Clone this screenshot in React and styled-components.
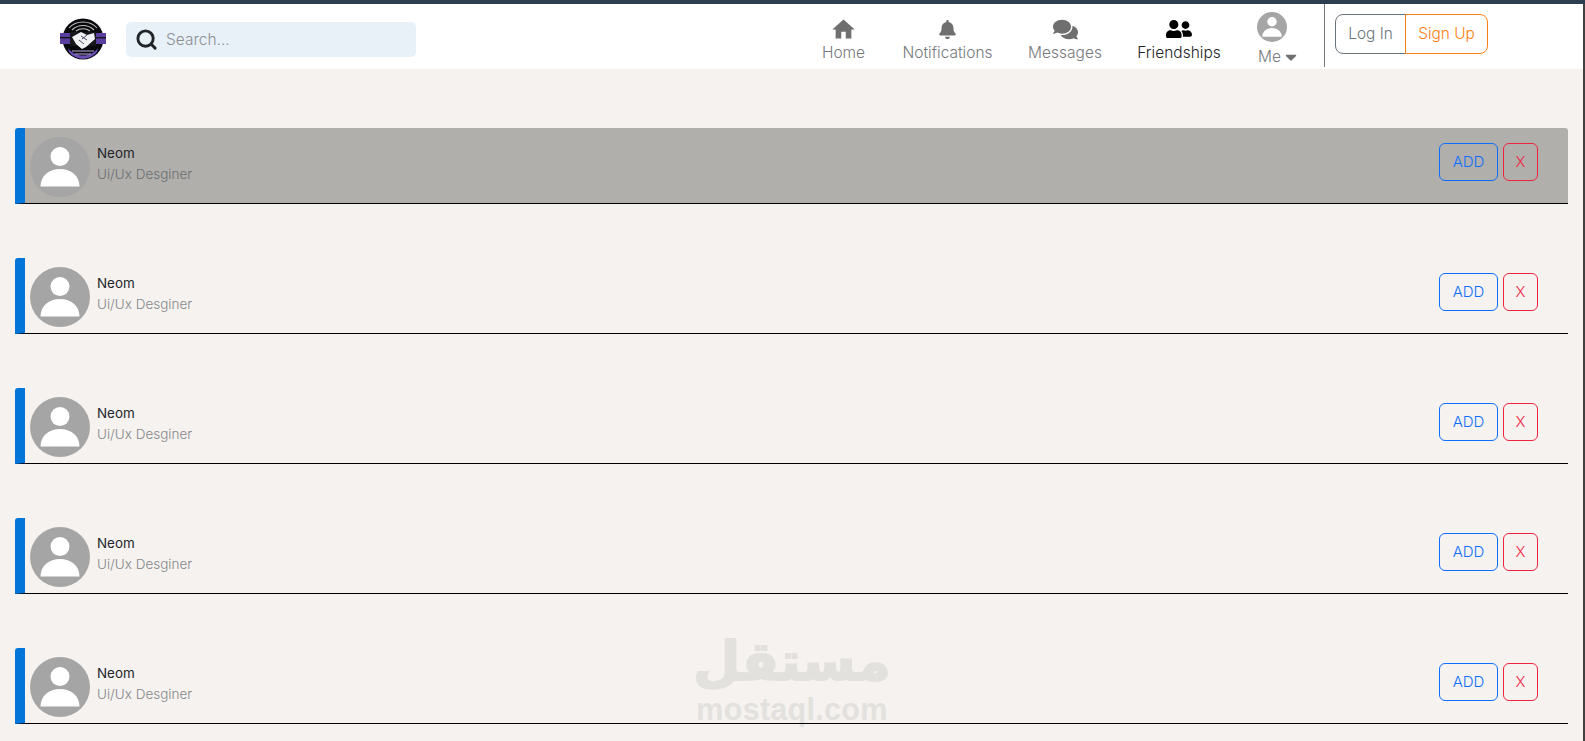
import React from "react";
import styled, { createGlobalStyle } from "styled-components";
import { FaBell, FaComments, FaUserFriends, FaCaretDown } from "react-icons/fa";
import { MdHome } from "react-icons/md";
import { Search } from "lucide-react";

const Global = createGlobalStyle`
  html, body { margin: 0; padding: 0; height: 100%; overflow: hidden; background: #f5f2ef; }
  * { box-sizing: border-box; }
  body { font-family: "Inter", "Liberation Sans", sans-serif; }
`;

const Page = styled.div`
  position: relative;
  height: 741px;
  background: #f5f2ef;
  overflow: hidden;
`;

const TopLine = styled.div`
  height: 4px;
  background: #2c3e50;
`;

const EdgeLine = styled.div`
  position: absolute;
  top: 4px;
  right: 0;
  bottom: 0;
  width: 2px;
  background: #414141;
`;

const Header = styled.header`
  display: flex;
  align-items: center;
  height: 65px;
  margin-right: 2px;
  background: #fff;
  padding-left: 60px;
`;

const LogoWrap = styled.div`
  width: 46px;
  height: 42px;
  margin-right: 20px;
  margin-top: 5px;
  flex: none;
`;

const SearchBox = styled.div`
  display: flex;
  align-items: center;
  width: 290px;
  height: 35px;
  margin-top: 6px;
  padding-left: 9px;
  background: #e9f1f8;
  border-radius: 5px;
  flex: none;
  color: #212529;
`;

const Placeholder = styled.span`
  margin-left: 8px;
  font-size: 15.5px;
  font-weight: 300;
  color: #8b8f93;
`;

const Nav = styled.nav`
  display: flex;
  align-items: flex-start;
  gap: 35px;
  margin-left: auto;
  height: 100%;
`;

const NavItem = styled.div`
  width: ${(p) => p.$w}px;
  display: flex;
  flex-direction: column;
  align-items: center;
  padding-top: 13px;
  color: ${(p) => (p.$active ? "#000" : "#6f6f6f")};
`;

const IconSlot = styled.div`
  display: flex;
  align-items: center;
  justify-content: center;
  height: 24px;
  font-size: ${(p) => p.$size}px;
`;

const NavLabel = styled.span`
  margin-top: 1px;
  font-size: 15.5px;
  line-height: 22px;
  font-weight: 300;
  white-space: nowrap;
  color: ${(p) => (p.$active ? "#212529" : "#777a7d")};
`;

const MeItem = styled.div`
  width: 38px;
  display: flex;
  flex-direction: column;
  align-items: flex-start;
  padding-top: 8px;
`;

const MeLabel = styled.span`
  display: flex;
  align-items: center;
  gap: 1px;
  margin: 4px 0 0 1px;
  font-size: 15.5px;
  line-height: 22px;
  font-weight: 300;
  color: #777a7d;
  white-space: nowrap;
  svg { color: #6f6f6f; font-size: 18px; }
`;

const Divider = styled.div`
  width: 1px;
  height: 63px;
  margin-left: 29px;
  margin-right: 10px;
  align-self: flex-start;
  background: #767676;
`;

const AuthGroup = styled.div`
  display: flex;
  margin-right: 95px;
  margin-top: -6px;
`;

const AuthButton = styled.div`
  display: flex;
  align-items: center;
  justify-content: center;
  width: ${(p) => p.$w}px;
  height: 40px;
  font-size: 15.4px;
  font-weight: 300;
  border: 1px solid ${(p) => p.$color};
  color: ${(p) => p.$color};
  border-radius: ${(p) => p.$radius};
  margin-left: ${(p) => p.$ml || 0}px;
`;

const List = styled.main`
  position: relative;
  z-index: 1;
  display: flex;
  flex-direction: column;
  gap: 54px;
  padding: 59px 17px 0 15px;
`;

const Row = styled.section`
  display: flex;
  align-items: center;
  height: 76px;
  padding: 2px 30px 0 5px;
  border-left: 10px solid #0275d8;
  border-bottom: 1px solid #000;
  border-radius: 3px 3px 0 0;
  background: ${(p) => (p.$hover ? "#b1afac" : "transparent")};
`;

const Avatar = styled.div`
  width: 60px;
  height: 60px;
  flex: none;
`;

const Info = styled.div`
  margin: 0 0 6px 7px;
  display: flex;
  flex-direction: column;
  gap: 3px;
`;

const Name = styled.div`
  font-size: 13.4px;
  line-height: 18px;
  font-weight: 400;
  color: #212529;
`;

const Role = styled.div`
  font-size: 13.5px;
  line-height: 18px;
  font-weight: 300;
  color: ${(p) => (p.$hover ? "#6c6f72" : "#85888b")};
`;

const Actions = styled.div`
  display: flex;
  gap: 5px;
  margin: 0 0 9px auto;
`;

const ActionButton = styled.button`
  display: flex;
  align-items: center;
  justify-content: center;
  width: ${(p) => p.$w}px;
  height: 38px;
  padding: 0 0 1px;
  background: transparent;
  border: 1px solid ${(p) => p.$color};
  border-radius: 6px;
  color: ${(p) => p.$color};
  font-family: inherit;
  font-size: 15px;
  font-weight: 300;
`;

const Watermark = styled.div`
  position: absolute;
  left: 696px;
  top: 630px;
  width: 192px;
  display: flex;
  flex-direction: column;
  align-items: center;
  color: #e3e1de;
  pointer-events: none;
`;

const WatermarkArabic = styled.div`
  font-family: "DejaVu Sans", sans-serif;
  font-weight: 700;
  font-size: 54px;
  line-height: 64px;
  direction: rtl;
  -webkit-text-stroke: 2px #e3e1de;
`;

const WatermarkLatin = styled.div`
  font-family: "Liberation Sans", sans-serif;
  font-weight: 700;
  font-size: 30.5px;
  line-height: 30px;
  letter-spacing: 0.3px;
`;

const Logo = () => (
  <svg width="46" height="42" viewBox="0 0 46 42" style={{ display: "block" }}>
    <path d="M7 12 C13 -1 33 -1 39 12" fill="none" stroke="#c4c4c4" strokeWidth="1.5" />
    <circle cx="23" cy="21" r="20.5" fill="#09090d" />
    <path d="M9 10 C16 2 30 2 37 10 M12 12 C18 6 28 6 34 12 M16 13 C20 10 26 10 30 13" fill="none" stroke="#bdbdbd" strokeWidth="1.1" />
    <rect x="0" y="15" width="12" height="11" fill="#5b3fa0" />
    <rect x="34" y="15" width="12" height="11" fill="#5b3fa0" />
    <rect x="0" y="19" width="46" height="1.4" fill="#15151b" />
    <rect x="10" y="14" width="26" height="14" fill="#16161c" />
    <path d="M12 19 L21 14 L27 17 L34 15 L35 21 L26 29 L22 31 L16 26 Z" fill="#f1f1f4" />
    <path d="M21 18 L27 22 M19 22 L24 26 M27 17 L22 21" stroke="#4c4763" strokeWidth="1" fill="none" />
    <path d="M8 30 C15 40 31 40 38 30 L37 34 C30 43 16 43 9 34 Z" fill="#6a4db5" />
    <path d="M12 33 H34 M15 36 H31" stroke="#b9aee0" strokeWidth="1" />
  </svg>
);

const UserPicture = ({ size }) => (
  <svg width={size} height={size} viewBox="0 0 60 60" style={{ display: "block" }}>
    <circle cx="30" cy="30" r="30" fill="#a5a5a5" />
    <circle cx="30" cy="19.5" r="9.5" fill="#fff" />
    <path d="M10.5 49.5 C10.5 39 19 32 30 32 C41 32 49.5 39 49.5 49.5 Z" fill="#fff" />
  </svg>
);

const people = [true, false, false, false, false];

export default function App() {
  return (
    <Page>
      <Global />
      <TopLine />
      <Header>
        <LogoWrap><Logo /></LogoWrap>
        <SearchBox>
          <Search size={23} strokeWidth={3} />
          <Placeholder>Search...</Placeholder>
        </SearchBox>
        <Nav>
          <NavItem $w={45}><IconSlot $size={27}><MdHome /></IconSlot><NavLabel>Home</NavLabel></NavItem>
          <NavItem $w={93}><IconSlot $size={19}><FaBell /></IconSlot><NavLabel>Notifications</NavLabel></NavItem>
          <NavItem $w={72}><IconSlot $size={25}><FaComments /></IconSlot><NavLabel>Messages</NavLabel></NavItem>
          <NavItem $w={86} $active><IconSlot $size={26}><FaUserFriends /></IconSlot><NavLabel $active>Friendships</NavLabel></NavItem>
          <MeItem>
            <UserPicture size={30} />
            <MeLabel>Me<FaCaretDown /></MeLabel>
          </MeItem>
        </Nav>
        <Divider />
        <AuthGroup>
          <AuthButton $w={71} $color="#6c757d" $radius="8px 0 0 8px">Log In</AuthButton>
          <AuthButton $w={83} $ml={-1} $color="#fd7e14" $radius="0 8px 8px 0">Sign Up</AuthButton>
        </AuthGroup>
      </Header>
      <List>
        {people.map((hover, i) => (
          <Row key={i} $hover={hover}>
            <Avatar><UserPicture size={60} /></Avatar>
            <Info>
              <Name>Neom</Name>
              <Role $hover={hover}>Ui/Ux Desginer</Role>
            </Info>
            <Actions>
              <ActionButton $w={59} $color="#0d6efd">ADD</ActionButton>
              <ActionButton $w={35} $color="#f0233f">X</ActionButton>
            </Actions>
          </Row>
        ))}
      </List>
      <Watermark>
        <WatermarkArabic>مستقل</WatermarkArabic>
        <WatermarkLatin>mostaql.com</WatermarkLatin>
      </Watermark>
      <EdgeLine />
    </Page>
  );
}
